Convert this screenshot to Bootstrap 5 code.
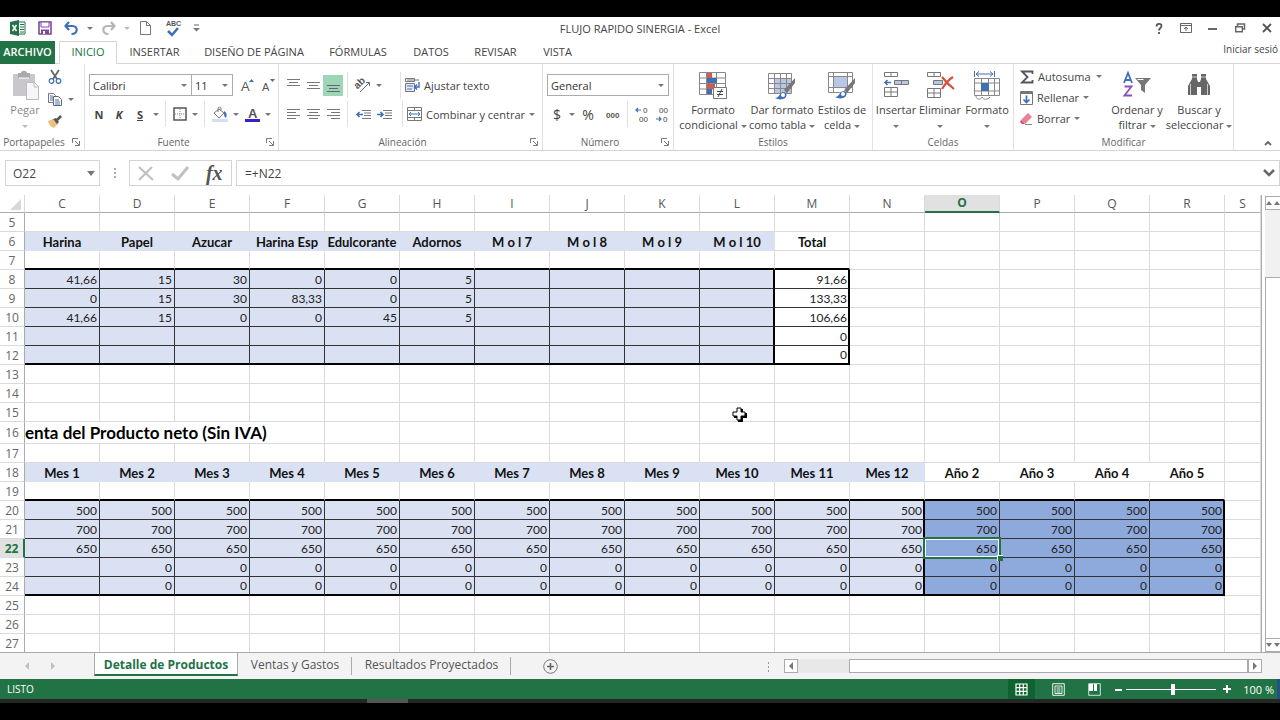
<!DOCTYPE html>
<html lang="es">
<head>
<meta charset="utf-8">
<meta name="viewport" content="width=device-width, initial-scale=1">
<title>FLUJO RAPIDO SINERGIA - Excel</title>
<link href="https://cdn.jsdelivr.net/npm/bootstrap@5.3.0/dist/css/bootstrap.min.css" rel="stylesheet">
<style>
  :root { --green:#217346; --line:#d4d4d4; --ink:#444; --band:#d9e1f2; --deep:#8ea9db; }
  body { background:#000; padding-top:17px; font:11px/15px "Open Sans","Noto Sans",sans-serif; color:var(--ink); overflow-x:hidden; }
  button { background:none; border:0; padding:0; color:inherit; font:inherit; }
  svg { display:block; flex:none; overflow:visible; }
  svg text { font-family:"Liberation Sans",sans-serif; }
  .side { flex:1 1 0; }
  .app-title { height:24px; font-size:11px; }
  .app-title button { height:22px; display:flex; align-items:center; justify-content:center; }
  .w-ic { width:27px; } .w-caret { width:10px; } .w-tool { width:20px; } .w-wide { width:22px; }
  .caret { width:0; height:0; border:3px solid transparent; border-top-color:#777; border-bottom:0; display:inline-block; vertical-align:middle; flex:none; }
  .ribbon-tabs { display:grid; grid-template-columns:55px 4px 58px 75px 124px 84px 62px 67px 57px 1fr; height:23px; border-bottom:1px solid var(--line); }
  .ribbon-tabs a { color:var(--ink); text-decoration:none; text-align:center; line-height:22px; white-space:nowrap; }
  .ribbon-tabs .file-tab { background:var(--green); color:#fff; font-weight:600; grid-column:1; }
  .ribbon-tabs .home-tab { grid-column:3; color:var(--green); border:1px solid var(--line); border-bottom:0; background:#fff; height:23px; line-height:20px; }
  .ribbon-tabs .sign-in { text-align:right; padding-right:2px; font-size:10px; line-height:16px; }
  .ribbon { height:87px; border-bottom:1px solid var(--line); }
  .grp { border-right:1px solid #e1e1e1; display:flex; flex-direction:column; position:relative; flex:none; }
  .grp-body { height:71px; }
  .grp-name { text-align:center; font-size:10px; line-height:15px; color:#666; }
  .launch { position:absolute; right:4px; bottom:4px; }
  .g1{width:85px} .g2{width:194px} .g3{width:264px} .g4{width:131px} .g5{width:199px} .g6{width:141px} .g7{width:220px}
  .g7 .grp-body { padding-left:6px; }
  .two { padding-top:7px; display:flex; flex-direction:column; gap:1px; }
  .line28 { height:28px; display:flex; align-items:center; }
  .line28 button { height:21px; display:flex; align-items:center; justify-content:center; white-space:nowrap; }
  .three { padding-top:2px; }
  .three button { height:21px; display:flex; align-items:center; white-space:nowrap; }
  .g1 .three button { padding-left:2px; gap:6px; height:22px; }
  .vsep { width:1px; height:26px; background:#e1e1e1; flex:none; }
  .on { background:#9fd5b7; }
  .big { padding-top:6px; width:66px; display:flex; flex-direction:column; align-items:center; height:71px; white-space:nowrap; line-height:15px; }
  .big span { padding-top:2px; }
  .w42 { width:42px; } .w46 { width:46px; } .w52 { width:52px; } .w62 { width:62px; } .w68 { width:68px; } .w70 { width:70px; } .w82 { width:82px; }
  .pick { appearance:none; border:1px solid #ababab; border-radius:0; height:22px; padding:0 3px; font:inherit; color:#333; background:#fff url("data:image/svg+xml,%3Csvg xmlns='http://www.w3.org/2000/svg' width='6' height='3'%3E%3Cpath d='M0 0h6L3 3z' fill='%23777'/%3E%3C/svg%3E") no-repeat right 4px center; }
  .pick-font { width:104px; } .pick-size { width:42px; margin-left:-1px; } .pick-format { width:122px; }
  .sym { font-size:14px; }
  .formula { padding:9px 0 9px 5px; display:flex; align-items:stretch; height:44px; }
  .formula input { border:0; outline:0; padding:0 0 0 7px; min-width:0; font-size:12px; color:#444; }
  .boxed { border:1px solid var(--line); height:26px; display:flex; align-items:center; }
  .name-box { width:95px; } .fx-box { width:103px; }
  .fx { font:italic 700 20px/24px "Liberation Serif",serif; color:#555; }
  .sheet-area { display:flex; }
  .grid-wrap { flex:1; min-width:0; position:relative; overflow:hidden; border-right:1px solid #ababab; }
  table.cells { table-layout:fixed; width:100%; border-collapse:separate; border-spacing:0; font:12px/16px Lato,"Open Sans",sans-serif; color:#222; }
  .cells col.rh { width:25px; } .cells col.cc { width:75px; }
  .cells td, .cells th { padding:1px 2px 0 0; height:19px; border-right:1px solid #dadada; border-bottom:1px solid #dadada; white-space:nowrap; font-weight:400; text-align:right; overflow:hidden; position:relative; }
  .cells thead th { height:18px; text-align:center; font:12px/16px "Open Sans",sans-serif; color:#555; border-bottom:1px solid #ababab; padding:0; }
  .cells tbody th { text-align:center; font:12px/16px "Open Sans",sans-serif; color:#666; border-right-color:#ababab; padding:1px 0 0; }
  .cells .tall td, .cells .tall th { height:22px; }
  .cells tbody tr:last-child > * { height:18px; border-bottom:0; }
  .cells td.title-cell { font-size:17px; font-weight:700; line-height:20px; text-align:left; color:#000; padding:0; }
  .cells td.hd { text-align:center; font-size:13px; font-weight:700; color:#111; border-right-color:#fff; padding-right:0; }
  .cells td.band { background:var(--band); border-color:var(--band); }
  .cells td.hd.last { border-right-color:#dadada; }
  .cells td.lo { background:var(--band); }
  .cells td.hi { background:var(--deep); }
  .cells td.bx { border-color:#333; }
  .cells td.bb { border-bottom:2px solid #000; }
  .cells td.br { border-right:2px solid #000; padding-right:1px; }
  .cells thead th.sel { background:#e1e1e1; color:var(--green); font-weight:700; border-bottom:2px solid var(--green); }
  .cells tbody th.sel { background:#e1e1e1; color:var(--green); font-weight:700; border-right:2px solid var(--green); }
  .cells td.active { overflow:visible; z-index:1; }
  .active::before { content:""; position:absolute; inset:-2px; border:2px solid var(--green); box-shadow:inset 0 0 0 1px #fff; }
  .active::after { content:""; position:absolute; right:-4px; bottom:-4px; width:6px; height:6px; background:var(--green); border:1px solid #fff; border-width:1px 0 0 1px; }
  .pointer { position:absolute; left:732px; top:212px; z-index:2; }
  .vbar { width:18px; padding:1px 0 0 3px; display:flex; flex-direction:column; }
  .vbar button { height:14px; border:1px solid #ababab; border-right:0; display:flex; align-items:center; justify-content:center; gap:2px; }
  .vtrack { height:67px; background:#f1f1f1; }
  .vthumb { flex:1; border:1px solid #ababab; border-right:0; border-bottom:0; }
  .up { border:3px solid transparent; border-bottom:4px solid #777; border-top:0; }
  .down { border:3px solid transparent; border-top:4px solid #777; border-bottom:0; }
  .left { border:4px solid transparent; border-right:4px solid #777; border-left:0; }
  .right { border:4px solid transparent; border-left:4px solid #777; border-right:0; }
  .tabs-bar { height:27px; background:#f3f3f3; border-top:1px solid #ababab; display:flex; }
  .tabs-bar .sheet-tab { color:#555; text-decoration:none; text-align:center; font-size:12px; line-height:24px; height:23px; white-space:nowrap; }
  .tab-nav { width:94px; padding-left:25px; gap:22px; display:flex; align-items:center; }
  .tab-nav .left { border-right-color:#c0c0c0; } .tab-nav .right { border-left-color:#c0c0c0; }
  .tabs-bar .current { width:144px; background:#fff; color:var(--green); font-weight:700; border:1px solid #ababab; border-top:0; border-bottom:2px solid var(--green); }
  .tabs-bar .t2 { width:114px; } .tabs-bar .t3 { width:159px; }
  .tabs-bar .t2, .tabs-bar .t3 { background:linear-gradient(#ababab,#ababab) no-repeat right 4px/1px 18px; }
  .hbar { width:478px; height:14px; margin:6px 18px 0 0; display:flex; background:#e8e8e8; }
  .hbar button { width:14px; border:1px solid #ababab; background:#fff; display:flex; align-items:center; justify-content:center; }
  .hthumb { flex:1; margin-left:51px; border:1px solid #ababab; background:#fff; }
  .status-bar { height:20px; background:var(--green); color:#fff; border-right:3px solid #24508a; display:flex; align-items:center; }
  .status-bar button { width:36px; height:20px; display:flex; align-items:center; justify-content:center; }
  .status-bar .view-on { width:27px; background:#0f6331; margin-right:5px; }
  .status-bar .step { width:12px; }
  .ready { font-size:10px; padding-left:7px; }
  .zoom-range { appearance:none; width:90px; height:12px; margin:0 5px 0 2px; background:linear-gradient(#fff,#fff) no-repeat center/100% 1px; }
  .zoom-range::-webkit-slider-thumb { appearance:none; width:4px; height:11px; background:#fff; }
  .zoom-value { padding:0 3px 0 10px; }
  .task-edge { height:4px; background:#262626; padding-left:367px; }
  .task-edge div { width:41px; height:4px; background:#555; }
</style>
</head>
<body>
<main class="bg-white">
  <header class="app-title d-flex align-items-start">
    <div class="d-flex side">
      <button class="w-ic ms-1" aria-label="Excel"><svg width="16" height="16" viewBox="0 0 16 16"><path d="M8 2h7v12H8z" fill="#fff" stroke="#217346"/><path d="M10 4.500h4M10 7h4M10 9.500h4M10 12h4" stroke="#217346"/><path d="M0 2 9 0v16L0 14z" fill="#217346"/><path d="M2.500 5l4 6M6.500 5l-4 6" stroke="#fff" stroke-width="1.500"/></svg></button>
      <button class="w-ic" aria-label="Guardar"><svg width="14" height="14" viewBox="0 0 14 14"><path d="M1 1h12v12H1z" fill="#fff" stroke="#80479d" stroke-width="1.600"/><path d="M3 1h8v5H3z" fill="#fff" stroke="#80479d"/><path d="M3 8.500h8V13H3z" fill="#80479d"/><path d="M5 10h2v3H5z" fill="#fff"/></svg></button>
      <button class="w-ic" aria-label="Deshacer"><svg width="15" height="13" viewBox="0 0 15 13"><path d="M5 0 1.500 4 5 8M2 4h6.500c6 0 5.500 8-1 8" fill="none" stroke="#3f6fb5" stroke-width="2.200"/></svg></button>
      <button class="w-caret" aria-label="Lista deshacer"><i class="caret"></i></button>
      <button class="w-ic" aria-label="Rehacer"><svg width="15" height="13" viewBox="0 0 15 13"><path d="M10 0l3.500 4L10 8M13 4H6.500c-6 0-5.500 8 1 8" fill="none" stroke="#b5b5b5" stroke-width="2.200"/></svg></button>
      <button class="w-caret" aria-label="Lista rehacer"><i class="caret opacity-50"></i></button>
      <button class="w-ic" aria-label="Nuevo"><svg width="11" height="14" viewBox="0 0 11 14"><path d="M.5.5h6l4 4v9H.5zM6.500.5v4h4" fill="#fff" stroke="#777"/></svg></button>
      <button class="w-ic" aria-label="Ortografía"><svg width="14" height="17" viewBox="0 0 14 17"><text x="0" y="6" font-size="7" font-weight="700" fill="#555">ABC</text><path d="M2 11l4 4 6-7" fill="none" stroke="#3f6fb5" stroke-width="2.500"/></svg></button>
      <button class="w-tool" aria-label="Personalizar"><svg width="7" height="8" viewBox="0 0 7 8"><path d="M1 1h5" stroke="#666"/><path d="M0 4h7L3.500 7.500z" fill="#777"/></svg></button>
    </div>
    <div class="pt-1">FLUJO RAPIDO SINERGIA - Excel</div>
    <div class="d-flex justify-content-end side">
      <button class="w-ic" aria-label="Ayuda"><svg width="8" height="11" viewBox="0 0 8 11"><path d="M1.500 3.500C1.500 0 6.500 0 6.500 3c0 2-2.500 2-2.500 4.500M4 9v2" fill="none" stroke="#555" stroke-width="1.800"/></svg></button>
      <button class="w-ic" aria-label="Opciones de cinta"><svg width="12" height="10" viewBox="0 0 12 10"><path d="M.5.5h11v9H.5zM.5 2.500h11M6 8V4M4 6l2-2 2 2" fill="none" stroke="#666"/></svg></button>
      <button class="w-ic" aria-label="Minimizar"><svg width="9" height="10"><path d="M0 5h9v2H0z" fill="#666"/></svg></button>
      <button class="w-ic" aria-label="Restaurar"><svg width="10" height="10" viewBox="0 0 10 10"><path d="M2.500 3V1h7v5H8" fill="none" stroke="#666" stroke-width="1.500"/><path d="M.7 3.700h6.600v5H.7z" fill="#fff" stroke="#666" stroke-width="1.400"/></svg></button>
      <button class="w-ic" aria-label="Cerrar"><svg width="10" height="10" viewBox="0 0 10 10"><path d="M1 1l8 8M9 1 1 9" stroke="#555" stroke-width="1.800"/></svg></button>
    </div>
  </header>

  <nav class="ribbon-tabs" aria-label="Cinta">
    <a href="#" class="file-tab">ARCHIVO</a>
    <a href="#" class="home-tab">INICIO</a>
    <a href="#">INSERTAR</a><a href="#">DISEÑO DE PÁGINA</a><a href="#">FÓRMULAS</a><a href="#">DATOS</a><a href="#">REVISAR</a><a href="#">VISTA</a>
    <a href="#" class="sign-in">Iniciar sesió</a>
  </nav>

  <section class="ribbon d-flex">
    <div class="grp g1">
      <div class="grp-body d-flex">
        <button class="big w42 text-black-50 ms-1"><svg width="28" height="30" viewBox="0 0 28 30"><path d="M2 4h22v22H2z" fill="#c9c7cb"/><path d="M7 3h3c0-3 6-3 6 0h3v5H7z" fill="#aaa"/><path d="M8 8h10" stroke="#fff"/><path d="M15.500 12.500h8l4 4v13h-12z" fill="#f7f5fa" stroke="#bbb"/><path d="M23 12.500v4.500h4.500" fill="none" stroke="#bbb"/></svg><span>Pegar<br><i class="caret opacity-50"></i></span></button>
        <div class="three">
          <button aria-label="Cortar"><svg width="14" height="14" viewBox="0 0 14 14"><path d="M3 0l6 9M11 0 5 9" stroke="#666" stroke-width="1.800"/><circle cx="3.500" cy="11" r="2.300" fill="none" stroke="#3f6fb5" stroke-width="1.200"/><circle cx="10.500" cy="11" r="2.300" fill="none" stroke="#3f6fb5" stroke-width="1.200"/></svg></button>
          <button aria-label="Copiar"><svg width="14" height="13" viewBox="0 0 14 13"><path d="M.5.5h5l2 2v7h-7z" fill="#fff" stroke="#777"/><path d="M5.500 3.500h5l3 3v6h-8z" fill="#fff" stroke="#666"/><path d="M2 3h3M2 5h3M2 7h3M7 7h4M7 9h5M7 11h5" stroke="#3f6fb5"/></svg><i class="caret"></i></button>
          <button aria-label="Copiar formato"><svg width="14" height="13" viewBox="0 0 14 13"><path d="M0 6l5-2 5 5-4 4c-3-1-5-3-6-7z" fill="#efc27a"/><path d="M5 4l3-1 3 4-2 2z" fill="#555"/><path d="M9 5l4-4" stroke="#555" stroke-width="2.500"/></svg></button>
        </div>
      </div>
      <div class="grp-name pe-3">Portapapeles</div>
      <svg class="launch" width="8" height="8" viewBox="0 0 8 8"><path d="M.5 5V.5H6M3 3l4 4M7.500 3v4.500H3" fill="none" stroke="#777"/></svg>
    </div>

    <div class="grp g2">
      <div class="grp-body two ps-1">
        <div class="line28"><select class="pick pick-font" aria-label="Fuente"><option>Calibri</option></select><select class="pick pick-size" aria-label="Tamaño"><option>11</option></select>
          <button class="w-wide ms-1" aria-label="Aumentar fuente"><svg width="13" height="15" viewBox="0 0 13 15"><text x="0" y="13" font-size="13" fill="#555">A</text><path d="M8 4h5L10.500 1z" fill="#3f6fb5"/></svg></button>
          <button class="w-tool" aria-label="Disminuir fuente"><svg width="13" height="15" viewBox="0 0 13 15"><text x="0" y="13" font-size="11" fill="#555">A</text><path d="M8 1h5l-2.500 3z" fill="#3f6fb5"/></svg></button></div>
        <div class="line28"><button class="w-tool fw-bold">N</button><button class="w-tool fw-bold fst-italic">K</button><button class="w-wide fw-bold text-decoration-underline">S</button><button class="w-caret" aria-label="Subrayado"><i class="caret"></i></button><i class="vsep ms-1 me-1"></i>
          <button class="w-tool" aria-label="Bordes"><svg width="14" height="14" viewBox="0 0 14 14"><path d="M1 1h12v12H1z" fill="none" stroke="#555" stroke-width="1.500"/><path d="M7 2v10M2 7h10" stroke="#888" stroke-dasharray="1 1"/></svg></button><button class="w-caret" aria-label="Más bordes"><i class="caret"></i></button><i class="vsep ms-1 me-1"></i>
          <button class="w-wide" aria-label="Relleno"><svg width="16" height="15" viewBox="0 0 16 15"><path d="M0 12h16v3H0z" fill="#d5def2"/><path d="M2 6l5-4 5 4-5 5z" fill="#fff" stroke="#777"/><path d="M6 5V1c0-1 3-1 3 0v2" fill="none" stroke="#777"/><path d="M12 4c3 2 3 4 2 7-2-1-2-3-2-7z" fill="#3f6fb5"/></svg></button><button class="w-caret" aria-label="Más colores"><i class="caret"></i></button>
          <button class="w-wide" aria-label="Color de fuente"><svg width="15" height="15" viewBox="0 0 15 15"><text x="3" y="11" font-size="13" font-weight="700" fill="#555">A</text><path d="M0 12h15v3H0z" fill="#3a1fc8"/></svg></button><button class="w-caret" aria-label="Más colores de fuente"><i class="caret"></i></button></div>
      </div>
      <div class="grp-name pe-3">Fuente</div>
      <svg class="launch" width="8" height="8" viewBox="0 0 8 8"><path d="M.5 5V.5H6M3 3l4 4M7.500 3v4.500H3" fill="none" stroke="#777"/></svg>
    </div>

    <div class="grp g3">
      <div class="grp-body two ps-1">
        <div class="line28"><button class="w-tool" aria-label="Arriba"><svg width="13" height="16"><path d="M0 2.500h13M2 5.500h9M0 8.500h13" stroke="#777"/></svg></button><button class="w-tool" aria-label="Medio"><svg width="13" height="16"><path d="M0 5.500h13M2 8.500h9M0 11.500h13" stroke="#777"/></svg></button><button class="w-tool on" aria-label="Abajo"><svg width="13" height="16"><path d="M0 8.500h13M2 11.500h9M0 14.500h13" stroke="#667"/></svg></button><i class="vsep ms-1 me-1"></i>
          <button class="w-wide" aria-label="Orientación"><svg width="16" height="16" viewBox="0 0 16 16"><text transform="rotate(-45 6 9)" x="1" y="9" font-size="10" font-weight="700" fill="#555">ab</text><path d="M5 15 14 6M11 5.500h3.500V9" fill="none" stroke="#666"/></svg></button><button class="w-caret" aria-label="Más orientación"><i class="caret"></i></button><i class="vsep ms-3 me-1"></i>
          <button><svg class="me-1" width="15" height="15" viewBox="0 0 15 15"><path d="M.5.5h9v3h-9zM2 2h12" fill="none" stroke="#777"/><path d="M.5 5.500h9v8h-9z" fill="#e4ebf7" stroke="#777"/><path d="M2 8h6M2 11h5" stroke="#3f6fb5"/><path d="M14 4v5h-4M12 6.500 9.500 9l2.500 2.500" fill="none" stroke="#3f6fb5" stroke-width="1.400"/></svg>Ajustar texto</button></div>
        <div class="line28"><button class="w-tool" aria-label="Izquierda"><svg width="13" height="12"><path d="M0 1.500h13M0 4.500h9M0 7.500h13M0 10.500h9" stroke="#777"/></svg></button><button class="w-tool" aria-label="Centro"><svg width="13" height="12"><path d="M0 1.500h13M2 4.500h9M0 7.500h13M2 10.500h9" stroke="#777"/></svg></button><button class="w-tool" aria-label="Derecha"><svg width="13" height="12"><path d="M0 1.500h13M4 4.500h9M0 7.500h13M4 10.500h9" stroke="#777"/></svg></button><i class="vsep ms-1 me-1"></i>
          <button class="w-wide" aria-label="Disminuir sangría"><svg width="15" height="11" viewBox="0 0 15 11"><path d="M6 1.500h9M8 4h7M8 6.500h7M6 9.500h9" stroke="#777"/><path d="M7 5.500H1M3.500 3 1 5.500 3.500 8" fill="none" stroke="#3f6fb5" stroke-width="1.600"/></svg></button><button class="w-tool" aria-label="Aumentar sangría"><svg width="15" height="11" viewBox="0 0 15 11"><path d="M6 1.500h9M8 4h7M8 6.500h7M6 9.500h9" stroke="#777"/><path d="M0 5.500h6M3.500 3 6 5.500 3.500 8" fill="none" stroke="#3f6fb5" stroke-width="1.600"/></svg></button><i class="vsep ms-2 me-1"></i>
          <button><svg class="me-1" width="15" height="14" viewBox="0 0 15 14"><path d="M.5.5h14v13H.5zM.5 3.500h14M.5 10.500h14M7.500.5v3M7.500 10.500v3" fill="#fff" stroke="#777"/><path d="M2 7h11M4 5 2 7l2 2M11 5l2 2-2 2" fill="none" stroke="#3f6fb5"/></svg>Combinar y centrar<i class="caret ms-1"></i></button></div>
      </div>
      <div class="grp-name pe-3">Alineación</div>
      <svg class="launch" width="8" height="8" viewBox="0 0 8 8"><path d="M.5 5V.5H6M3 3l4 4M7.500 3v4.500H3" fill="none" stroke="#777"/></svg>
    </div>

    <div class="grp g4">
      <div class="grp-body two ps-1">
        <div class="line28"><select class="pick pick-format" aria-label="Formato de número"><option>General</option></select></div>
        <div class="line28"><button class="w-tool sym">$</button><button class="w-caret" aria-label="Moneda"><i class="caret"></i></button><button class="w-wide sym">%</button><button class="w-tool ms-1"><svg width="14" height="9"><text x="0" y="8" font-size="8" font-weight="700" fill="#555">000</text></svg></button><i class="vsep ms-1 me-1"></i>
          <button class="w-tool" aria-label="Aumentar decimales"><svg width="14" height="17" viewBox="0 0 14 17"><text x="8" y="7" font-size="8" fill="#444">0</text><text x="4" y="16" font-size="8" fill="#444">00</text><path d="M6 4H1M3 2 1 4l2 2" fill="none" stroke="#3f6fb5" stroke-width="1.200"/></svg></button><button class="w-tool" aria-label="Disminuir decimales"><svg width="14" height="17" viewBox="0 0 14 17"><text x="4" y="7" font-size="8" fill="#444">00</text><text x="8" y="16" font-size="8" fill="#444">0</text><path d="M1 13h5M4 11l2 2-2 2" fill="none" stroke="#3f6fb5" stroke-width="1.200"/></svg></button></div>
      </div>
      <div class="grp-name pe-3">Número</div>
      <svg class="launch" width="8" height="8" viewBox="0 0 8 8"><path d="M.5 5V.5H6M3 3l4 4M7.500 3v4.500H3" fill="none" stroke="#777"/></svg>
    </div>

    <div class="grp g5">
      <div class="grp-body d-flex ps-1">
        <button class="big w70"><svg width="28" height="30" viewBox="0 0 28 30"><path d="M.5 2.500h26v22H.5zM.5 8h26M.5 13.500h26M.5 19h26M7.500 2.500v22M17.500 2.500v22" fill="#fff" stroke="#888"/><path d="M8 3h5v5H8zM8 14h8v5H8z" fill="#d25a4c"/><path d="M8 8h10v5H8zM8 19h5v5H8z" fill="#3f6fb5"/><path d="M14.500 17.500h13v11h-13z" fill="#fff" stroke="#777"/><path d="M18 21.500h6M18 24.500h6M23 19l-4 8" stroke="#444"/></svg><span>Formato<br>condicional <i class="caret"></i></span></button>
        <button class="big w68"><svg width="28" height="30" viewBox="0 0 28 30"><path d="M.5 3.500h23v20H.5z" fill="#fff" stroke="#888"/><path d="M6 9h17v14H6z" fill="#b8c8e4"/><path d="M.5 8.500h23M.5 13.500h23M.5 18.500h23M6.500 3.500v20M12.500 3.500v20M18.500 3.500v20" stroke="#888"/><path d="M27 8v5l-8 10-3-3z" fill="#777"/><path d="M7 28c5 0 4-6 9-6 4 1 3 6-1 7-3 1-6 0-8-1z" fill="#3f6fb5"/><circle cx="15" cy="25" r="2" fill="#fff"/></svg><span>Dar formato<br>como tabla <i class="caret"></i></span></button>
        <button class="big w52"><svg width="28" height="30" viewBox="0 0 28 30"><path d="M.5 2.500h24v20H.5zM.5 6.500h24M.5 17.500h24M5.500 2.500v20M19.500 2.500v20" fill="#fff" stroke="#888"/><path d="M6 7h13v10H6z" fill="#b8c8e4"/><path d="M27 8v5l-8 10-3-3z" fill="#777"/><path d="M7 27c5 0 4-6 9-6 4 1 3 6-1 7-3 1-6 0-8-1z" fill="#3f6fb5"/><circle cx="15" cy="24" r="2" fill="#fff"/></svg><span>Estilos de<br>celda <i class="caret"></i></span></button>
      </div>
      <div class="grp-name">Estilos</div>
    </div>

    <div class="grp g6">
      <div class="grp-body d-flex">
        <button class="big w46"><svg width="26" height="30" viewBox="0 0 26 30"><path d="M1.500 2.500h13v4h-13zM8 2.500v4M1.500 17.500h13v9h-13zM1.500 22h13M8 17.500v9" fill="#fff" stroke="#777"/><path d="M11.500 10.500h14v4h-14zM18.500 10.500v4" fill="#b8c8e4" stroke="#777"/><path d="M8 12.500H2M4.500 10 2 12.500 4.500 15" fill="none" stroke="#3f6fb5" stroke-width="1.500"/></svg><span>Insertar<br><i class="caret"></i></span></button>
        <button class="big w42"><svg width="28" height="30" viewBox="0 0 28 30"><path d="M1.500 2.500h13v4h-13zM8 2.500v4M1.500 18.500h13v9h-13zM1.500 23h13M8 18.500v9" fill="#fff" stroke="#777"/><path d="M7.500 10.500h9v4h-9z" fill="#b8c8e4" stroke="#777"/><path d="M16 7c3 4 7 8 12 12M27 7c-5 3-8 7-11 12" fill="none" stroke="#d2503c" stroke-width="2.200"/></svg><span>Eliminar<br><i class="caret"></i></span></button>
        <button class="big w52"><svg width="28" height="30" viewBox="0 0 28 30"><path d="M1.500 1v6M21.500 1v6M3 4h17M6 1.500 3 4l3 2.500M17 1.500 20 4l-3 2.500" fill="none" stroke="#3f6fb5"/><path d="M1.500 8.500h25v17h-25zM1.500 13h25M1.500 21h25M8.500 8.500v17M15.500 8.500v17M21.500 8.500v17M3 26c0 4 5 4 6 1 1 3 6 3 8 0" fill="#fff" stroke="#888"/><path d="M8 13h8v8H8z" fill="#3f6fb5"/></svg><span>Formato<br><i class="caret"></i></span></button>
      </div>
      <div class="grp-name">Celdas</div>
    </div>

    <div class="grp g7">
      <div class="grp-body d-flex">
        <div class="three w82 me-1">
          <button class="w-100"><svg class="me-1" width="14" height="14" viewBox="0 0 14 14"><path d="M12.500 4V1.500H2L7.500 7 2 12.500h10.500V10" fill="none" stroke="#555" stroke-width="1.800"/></svg>Autosuma<i class="caret ms-auto"></i></button>
          <button><svg class="me-1" width="13" height="14" viewBox="0 0 13 14"><path d="M.5.5h12v13H.5z" fill="#fff" stroke="#777"/><path d="M1 1h11v2H1z" fill="#777"/><path d="M6.500 4.500V11M3.500 8.500l3 3 3-3" fill="none" stroke="#3f6fb5" stroke-width="1.700"/></svg>Rellenar<i class="caret ms-1"></i></button>
          <button><svg class="me-1" width="13" height="12" viewBox="0 0 13 12"><path d="M1 7 8 0l4 4-7 7z" fill="#e8829a"/><path d="M1 7l4 4H2L0 9z" fill="#c9506e"/><path d="M5 11.500h7" stroke="#888"/></svg>Borrar<i class="caret ms-1"></i></button>
        </div>
        <button class="big w62"><svg width="28" height="30" viewBox="0 0 28 30"><path d="M1 13 5 3l4 10M2.500 10h5" fill="none" stroke="#3f6fb5" stroke-width="1.800"/><path d="M1.500 16.500h7l-7 9h7.500" fill="none" stroke="#8b4fb5" stroke-width="1.800"/><path d="M12 8h16l-6 7v8l-4-3v-5z" fill="#777"/><path d="M14.500 9.500h6" stroke="#fff"/></svg><span>Ordenar y<br>filtrar <i class="caret"></i></span></button>
        <button class="big w62"><svg width="26" height="30" viewBox="0 0 26 30"><path d="M6 4h5v5l1 3h2l1-3V4h5v5l4 7v9h-9v-8h-4v8H2v-9l4-7z" fill="#666"/><path d="M6 7h5M15 7h5M4.500 14v11M21.500 14v11" stroke="#ccc"/></svg><span>Buscar y<br>seleccionar <i class="caret"></i></span></button>
      </div>
      <div class="grp-name">Modificar</div>
    </div>
    <button class="ms-auto align-self-end pb-1 pe-2" aria-label="Contraer"><svg width="8" height="6" viewBox="0 0 8 6"><path d="M1 5l3-3 3 3" fill="none" stroke="#666" stroke-width="1.800"/></svg></button>
  </section>

  <section class="formula">
    <div class="boxed name-box"><input class="flex-fill w-50" value="O22" aria-label="Cuadro de nombres"><button class="pe-1" aria-label="Nombres"><svg width="8" height="5"><path d="M0 0h8L4 5z" fill="#777"/></svg></button></div>
    <svg class="align-self-center mx-2" width="13" height="12"><path d="M6 1h2v2H6zM6 5h2v2H6zM6 9h2v2H6z" fill="#aaa"/></svg>
    <div class="boxed fx-box justify-content-around">
      <button aria-label="Cancelar"><svg width="16" height="15" viewBox="0 0 16 15"><path d="M1 1l14 13M14 1 1 14" stroke="#c0c0c0" stroke-width="2.200"/></svg></button>
      <button aria-label="Introducir"><svg width="18" height="15" viewBox="0 0 18 15"><path d="M1 8l6 5L17 1" fill="none" stroke="#c0c0c0" stroke-width="3"/></svg></button>
      <button class="fx" aria-label="Insertar función">fx</button>
    </div>
    <div class="boxed flex-fill ms-1"><input class="flex-fill ps-2" value="=+N22" aria-label="Barra de fórmulas"><button class="pe-1" aria-label="Expandir"><svg width="12" height="8" viewBox="0 0 12 8"><path d="M1 1l5 5 5-5" fill="none" stroke="#666" stroke-width="2.500"/></svg></button></div>
  </section>

  <section class="sheet-area">
    <div class="grid-wrap">
      <table class="cells"><colgroup id="cols"></colgroup><thead><tr id="heads"></tr></thead><tbody id="rows"></tbody></table>
      <svg class="pointer" width="15" height="15" viewBox="0 0 15 15"><path d="M6 2h5v4h4v5h-4v4H6v-4H2V6h4z" fill="#000"/><path d="M5 1h4v4h4v4H9v4H5V9H1V5h4z" fill="#fff" stroke="#000"/></svg>
    </div>
    <div class="vbar"><button aria-label="Subir"><i class="up"></i><i class="up"></i></button><div class="vtrack"></div><div class="vthumb"></div><button aria-label="Bajar"><i class="down"></i><i class="down"></i></button></div>
  </section>

  <nav class="tabs-bar" aria-label="Hojas">
    <div class="tab-nav"><i class="left"></i><i class="right"></i></div>
    <a href="#" class="sheet-tab current">Detalle de Productos</a><a href="#" class="sheet-tab t2">Ventas y Gastos</a><a href="#" class="sheet-tab t3">Resultados Proyectados</a>
    <button class="px-4 ms-1" aria-label="Hoja nueva"><svg class="ms-1" width="15" height="15" viewBox="0 0 15 15"><circle cx="7.500" cy="7.500" r="6.800" fill="none" stroke="#777"/><path d="M7.500 4v7M4 7.500h7" stroke="#666" stroke-width="1.600"/></svg></button>
    <svg class="ms-auto me-2 mt-2" width="10" height="12"><path d="M2 1h1v2H2zM2 5h1v2H2zM2 9h1v2H2z" fill="#999"/></svg>
    <div class="hbar"><button aria-label="Izquierda"><i class="left"></i></button><div class="hthumb"></div><button aria-label="Derecha"><i class="right"></i></button></div>
  </nav>

  <footer class="status-bar">
    <span class="ready me-auto">LISTO</span>
    <button class="view-on" aria-label="Normal"><svg width="13" height="13" viewBox="0 0 13 13"><path d="M1 1h11v11H1zM1 4.700h11M1 8.300h11M4.700 1v11M8.300 1v11" fill="none" stroke="#fff" stroke-width="1.200"/></svg></button>
    <button aria-label="Diseño de página"><svg width="13" height="13" viewBox="0 0 13 13"><path d="M.7.7h11.600v11.600H.7zM3 3h7v7.500H3zM4.500 5h4M4.500 7h4M4.500 9h4" fill="none" stroke="#e6f2ea"/></svg></button>
    <button aria-label="Saltos de página"><svg width="13" height="13" viewBox="0 0 13 13"><path d="M.7.7h11.600v11.600H.7z" fill="none" stroke="#cfe3d7"/><path d="M1 1h4v7H1zM6 1h3v7H6z" fill="#fff"/></svg></button>
    <button class="step" aria-label="Alejar"><svg width="7" height="7"><path d="M0 3h7v2H0z" fill="#fff"/></svg></button>
    <input type="range" class="zoom-range" min="0" max="100" value="52" aria-label="Zoom">
    <button class="step" aria-label="Acercar"><svg width="8" height="8"><path d="M0 3h8v2H0zM3 0h2v8H3z" fill="#fff"/></svg></button>
    <span class="zoom-value">100 %</span>
  </footer>
  <div class="task-edge"><div></div></div>
</main>
<script src="https://cdn.jsdelivr.net/npm/bootstrap@5.3.0/dist/js/bootstrap.bundle.min.js"></script>
<script>
  const letters = 'CDEFGHIJKLMNOPQRS'.split('');
  const blank = n => Array(n).fill('');
  const data = {
    6: ['Harina','Papel','Azucar','Harina Esp','Edulcorante','Adornos','M o l 7','M o l 8','M o l 9','M o l 10','Total'],
    8: ['41,66','15','30','0','0','5',...blank(4),'91,66'],
    9: ['0','15','30','83,33','0','5',...blank(4),'133,33'],
    10: ['41,66','15','0','0','45','5',...blank(4),'106,66'],
    11: [...blank(10),'0'],
    12: [...blank(10),'0'],
    18: [...Array.from({length:12}, (_, i) => 'Mes ' + (i + 1)),'Año 2','Año 3','Año 4','Año 5'],
    20: Array(16).fill('500'), 21: Array(16).fill('700'), 22: Array(16).fill('650'),
    23: ['',...Array(15).fill('0')], 24: ['',...Array(15).fill('0')]
  };
  function classes(r, c) {
    const k = [];
    if (r === 6 && c < 11) k.push('hd', c < 10 ? 'band' : 'last');
    if (r === 18 && c < 16) k.push('hd', c < 12 ? 'band' : c === 15 ? 'last' : '');
    if ((r === 7 || r === 12) && c < 11) k.push('bb');
    if ((r === 19 || r === 24) && c < 16) k.push('bb');
    if (r > 7 && r < 13 && c < 11) { k.push('bx'); if (c < 10) k.push('lo'); if (c > 8) k.push('br'); }
    if (r > 19 && r < 25 && c < 16) { k.push('bx', c < 12 ? 'lo' : 'hi'); if (c === 11 || c === 15) k.push('br'); }
    if (r === 22 && c === 12) k.push('active');
    return k.join(' ');
  }
  document.getElementById('cols').innerHTML = '<col class="rh">' + '<col class="cc">'.repeat(16) + '<col>';
  document.getElementById('heads').innerHTML = '<th><svg width="24" height="14"><path d="M21 2v11H10z" fill="#d8d8d8"/></svg></th>' +
    letters.map(l => `<th scope="col" class="${l === 'O' ? 'sel' : ''}">${l}</th>`).join('');
  let html = '';
  for (let r = 5; r <= 27; r++) {
    html += `<tr class="${r === 16 ? 'tall' : ''}"><th scope="row" class="${r === 22 ? 'sel' : ''}">${r}</th>`;
    let c = 0;
    if (r === 16) { html += '<td colspan="4" class="title-cell">enta del Producto neto (Sin IVA)</td>'; c = 4; }
    for (; c < 17; c++) html += `<td class="${classes(r, c)}">${(data[r] || [])[c] || ''}</td>`;
    html += '</tr>';
  }
  document.getElementById('rows').innerHTML = html;
</script>
</body>
</html>
